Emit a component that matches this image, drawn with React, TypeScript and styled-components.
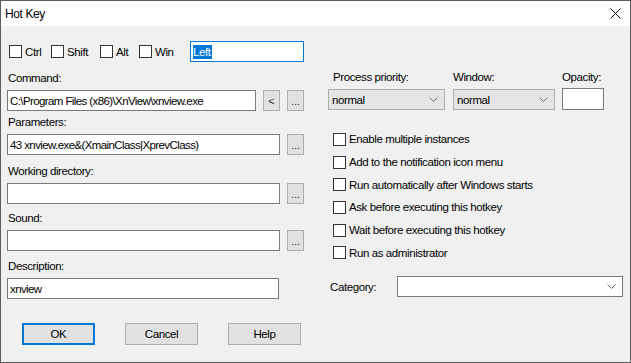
import React from 'react'
import styled, { createGlobalStyle } from 'styled-components'

const GlobalStyle = createGlobalStyle`
  html, body {
    margin: 0;
    padding: 0;
    background: #ffffff;
  }
`

const Window = styled.div`
  width: 631px;
  height: 363px;
  box-sizing: border-box;
  border: 1px solid #5c5c5c;
  background: #f0f0f0;
  display: flex;
  flex-direction: column;
  font-family: 'Liberation Sans', Arial, sans-serif;
  font-size: 11.5px;
  letter-spacing: -0.4px;
  color: #000;
`

const TitleBar = styled.div`
  height: 25px;
  flex: none;
  background: #ffffff;
  display: flex;
  align-items: center;
  justify-content: space-between;
  padding: 0 9px 0 4px;
  font-size: 12px;
`

const Body = styled.div`
  display: grid;
  grid-template-columns: 297px 295px;
  column-gap: 24px;
  padding: 15px 0 0 6px;
`

const Column = styled.div`
  display: flex;
  flex-direction: column;
`

const HotkeyRow = styled.div`
  display: flex;
  align-items: center;
  height: 21px;
  padding-left: 2px;
`

const Modifier = styled.label<{ $width: number }>`
  display: flex;
  align-items: center;
  width: ${({ $width }) => $width}px;
  gap: 3px;
`

const Box = styled.span`
  width: 13px;
  height: 13px;
  box-sizing: border-box;
  border: 1px solid #333333;
  background: #ffffff;
  flex: none;
`

const HotkeyField = styled.div`
  width: 114px;
  height: 21px;
  box-sizing: border-box;
  border: 1px solid #0078d7;
  background: #ffffff;
  display: flex;
  align-items: center;
  padding-left: 2px;
`

const Selected = styled.span`
  background: #0078d7;
  color: #ffffff;
  line-height: 14px;
  padding-right: 1px;
`

const Field = styled.div<{ $top: number }>`
  display: flex;
  flex-direction: column;
  gap: 4px;
  margin-top: ${({ $top }) => $top}px;
`

const Label = styled.div<{ $indent?: number }>`
  height: 16px;
  line-height: 16px;
  padding-left: ${({ $indent }) => $indent ?? 1}px;
  white-space: nowrap;
`

const InputRow = styled.div`
  display: flex;
  gap: 7px;
`

const TextBox = styled.div<{ $width?: number }>`
  ${({ $width }) => ($width ? `width: ${$width}px; flex: none;` : 'flex: 1;')}
  height: 21px;
  box-sizing: border-box;
  border: 1px solid #7a7a7a;
  background: #ffffff;
  padding-left: 2px;
  display: flex;
  align-items: center;
  white-space: nowrap;
  overflow: hidden;
  letter-spacing: -0.6px;
`

const SmallButton = styled.div`
  width: 17px;
  height: 21px;
  flex: none;
  box-sizing: border-box;
  border: 1px solid #adadad;
  background: #e1e1e1;
  display: flex;
  align-items: center;
  justify-content: center;
  color: #333;
  font-size: 11px;
  letter-spacing: 0;
`

const ButtonRow = styled.div`
  display: flex;
  gap: 30px;
  margin-top: 24px;
  padding-left: 15px;
`

const PushButton = styled.div<{ $default?: boolean }>`
  width: 73px;
  height: 22px;
  box-sizing: border-box;
  border: ${({ $default }) => ($default ? '2px solid #0078d7' : '1px solid #adadad')};
  background: #e1e1e1;
  display: flex;
  align-items: center;
  justify-content: center;
`

const TopControls = styled.div`
  display: grid;
  grid-template-columns: 117px 102px 42px;
  column-gap: 8px;
  margin-top: 28px;
`

const Stack = styled.div<{ $shift?: number }>`
  display: flex;
  flex-direction: column;
  gap: 4px;
  margin-left: ${({ $shift }) => $shift ?? 0}px;
`

const Combo = styled.div<{ $flat?: boolean; $width?: number }>`
  height: 21px;
  box-sizing: border-box;
  ${({ $width }) => ($width ? `width: ${$width}px;` : '')}
  border: 1px solid ${({ $flat }) => ($flat ? '#7a7a7a' : '#adadad')};
  background: ${({ $flat }) => ($flat ? '#ffffff' : '#e5e5e5')};
  display: flex;
  align-items: center;
  justify-content: space-between;
  padding: 0 6px 0 3px;
`

const OpacityBox = styled.div`
  width: 42px;
  height: 22px;
  margin-top: -1px;
  box-sizing: border-box;
  border: 1px solid #7a7a7a;
  background: #ffffff;
`

const OptionList = styled.div`
  display: flex;
  flex-direction: column;
  margin-top: 18px;
  padding-left: 5px;
`

const Option = styled.label`
  display: flex;
  align-items: center;
  gap: 3px;
  height: 22.7px;
  white-space: nowrap;
`

const CategoryRow = styled.div`
  display: flex;
  align-items: center;
  margin-top: 12px;
  padding-left: 2px;
`

const CategoryLabel = styled.span`
  width: 67px;
`

const Chevron = () => (
  <svg width="9" height="5" viewBox="0 0 9 5">
    <polyline points="0.5,0.5 4.5,4.5 8.5,0.5" fill="none" stroke="#6d6d6d" strokeWidth="1" />
  </svg>
)

const CloseIcon = () => (
  <svg width="11" height="11" viewBox="0 0 11 11">
    <path d="M0.5 0.5 L10.5 10.5 M10.5 0.5 L0.5 10.5" stroke="#111" strokeWidth="1" />
  </svg>
)

const modifiers = [
  { name: 'Ctrl', width: 42 },
  { name: 'Shift', width: 49 },
  { name: 'Alt', width: 39 },
  { name: 'Win', width: 51 },
]

const options = [
  'Enable multiple instances',
  'Add to the notification icon menu',
  'Run automatically after Windows starts',
  'Ask before executing this hotkey',
  'Wait before executing this hotkey',
  'Run as administrator',
]

export default function App() {
  return (
    <>
      <GlobalStyle />
      <Window>
        <TitleBar>
          <span>Hot Key</span>
          <CloseIcon />
        </TitleBar>
        <Body>
          <Column>
            <HotkeyRow>
              {modifiers.map(m => (
                <Modifier key={m.name} $width={m.width}>
                  <Box />
                  {m.name}
                </Modifier>
              ))}
              <HotkeyField>
                <Selected>Left</Selected>
              </HotkeyField>
            </HotkeyRow>

            <Field $top={8}>
              <Label>Command:</Label>
              <InputRow>
                <TextBox>C:\Program Files (x86)\XnView\xnview.exe</TextBox>
                <SmallButton>&lt;</SmallButton>
                <SmallButton>...</SmallButton>
              </InputRow>
            </Field>

            <Field $top={3}>
              <Label>Parameters:</Label>
              <InputRow>
                <TextBox>43 xnview.exe&amp;(XmainClass|XprevClass)</TextBox>
                <SmallButton>...</SmallButton>
              </InputRow>
            </Field>

            <Field $top={8}>
              <Label>Working directory:</Label>
              <InputRow>
                <TextBox />
                <SmallButton>...</SmallButton>
              </InputRow>
            </Field>

            <Field $top={6}>
              <Label>Sound:</Label>
              <InputRow>
                <TextBox />
                <SmallButton>...</SmallButton>
              </InputRow>
            </Field>

            <Field $top={7}>
              <Label>Description:</Label>
              <InputRow>
                <TextBox $width={272}>xnview</TextBox>
              </InputRow>
            </Field>

            <ButtonRow>
              <PushButton $default>OK</PushButton>
              <PushButton>Cancel</PushButton>
              <PushButton>Help</PushButton>
            </ButtonRow>
          </Column>

          <Column>
            <TopControls>
              <Stack>
                <Label $indent={5}>Process priority:</Label>
                <Combo>
                  normal
                  <Chevron />
                </Combo>
              </Stack>
              <Stack>
                <Label $indent={0}>Window:</Label>
                <Combo>
                  normal
                  <Chevron />
                </Combo>
              </Stack>
              <Stack $shift={-1}>
                <Label $indent={-3}>Opacity:</Label>
                <OpacityBox />
              </Stack>
            </TopControls>

            <OptionList>
              {options.map(o => (
                <Option key={o}>
                  <Box />
                  {o}
                </Option>
              ))}
            </OptionList>

            <CategoryRow>
              <CategoryLabel>Category:</CategoryLabel>
              <Combo $flat $width={226}>
                <span />
                <Chevron />
              </Combo>
            </CategoryRow>
          </Column>
        </Body>
      </Window>
    </>
  )
}
